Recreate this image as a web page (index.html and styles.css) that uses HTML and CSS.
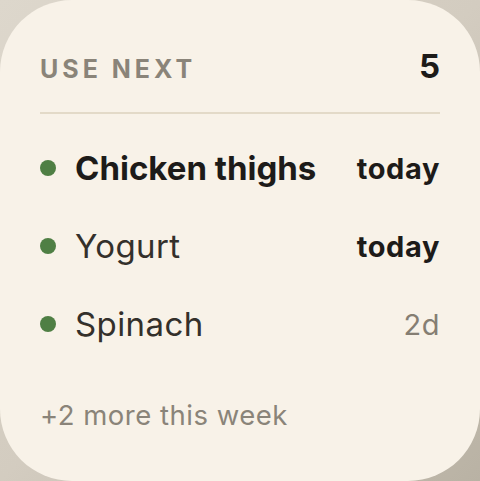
FILE: index.html
```html
<!DOCTYPE html>
<html>
<head>
<meta charset="utf-8">
<link rel="stylesheet" href="styles.css">
</head>
<body>
<div class="card">
  <div class="header">
    <span class="title">USE NEXT</span>
    <span class="count">5</span>
  </div>
  <div class="divider"></div>
  <ul class="list">
    <li class="row">
      <span class="dot"></span>
      <span class="name strong">Chicken thighs</span>
      <span class="when strong">today</span>
    </li>
    <li class="row">
      <span class="dot"></span>
      <span class="name">Yogurt</span>
      <span class="when strong">today</span>
    </li>
    <li class="row">
      <span class="dot"></span>
      <span class="name">Spinach</span>
      <span class="when muted">2d</span>
    </li>
  </ul>
  <div class="footer">+2 more this week</div>
</div>
</body>
</html>
```
FILE: styles.css
```css
html, body {
  margin: 0;
  padding: 0;
}
body {
  width: 480px;
  height: 481px;
  background: linear-gradient(135deg, #ddd7cc 0%, #d3ccc0 50%, #b9b2a4 100%);
  font-family: Inter, "Noto Sans", sans-serif;
  overflow: hidden;
}
.card {
  box-sizing: border-box;
  width: 480px;
  height: 481px;
  border-radius: 72px;
  background: #f8f2e8;
  padding: 46px 40px 0 40px;
}
.header {
  display: flex;
  justify-content: space-between;
  align-items: baseline;
  height: 40px;
  line-height: 40px;
}
.title {
  font-size: 25px;
  font-weight: 700;
  letter-spacing: 4px;
  color: #8a8479;
}
.count {
  font-size: 33px;
  font-weight: 700;
  color: #1d1b19;
}
.divider {
  height: 2px;
  background: #e3dac8;
  margin-top: 26px;
}
.list {
  list-style: none;
  margin: 15px 0 0 0;
  padding: 0;
}
.row {
  display: flex;
  align-items: center;
  height: 78px;
}
.dot {
  width: 16px;
  height: 16px;
  border-radius: 50%;
  background: #4f7f44;
  flex: none;
  margin-right: 19px;
}
.name {
  flex: 1;
  font-size: 33px;
  letter-spacing: 0.4px;
  color: #34302b;
}
.name.strong {
  font-weight: 700;
  letter-spacing: 0;
  color: #1d1b19;
}
.when {
  font-size: 29px;
}
.when.strong {
  font-weight: 700;
  letter-spacing: 0.6px;
  color: #1d1b19;
}
.when.muted {
  letter-spacing: 0.5px;
  color: #857e73;
}
.footer {
  margin-top: 37px;
  height: 30px;
  line-height: 30px;
  font-size: 27.5px;
  letter-spacing: 0.5px;
  color: #8a8479;
}
```
